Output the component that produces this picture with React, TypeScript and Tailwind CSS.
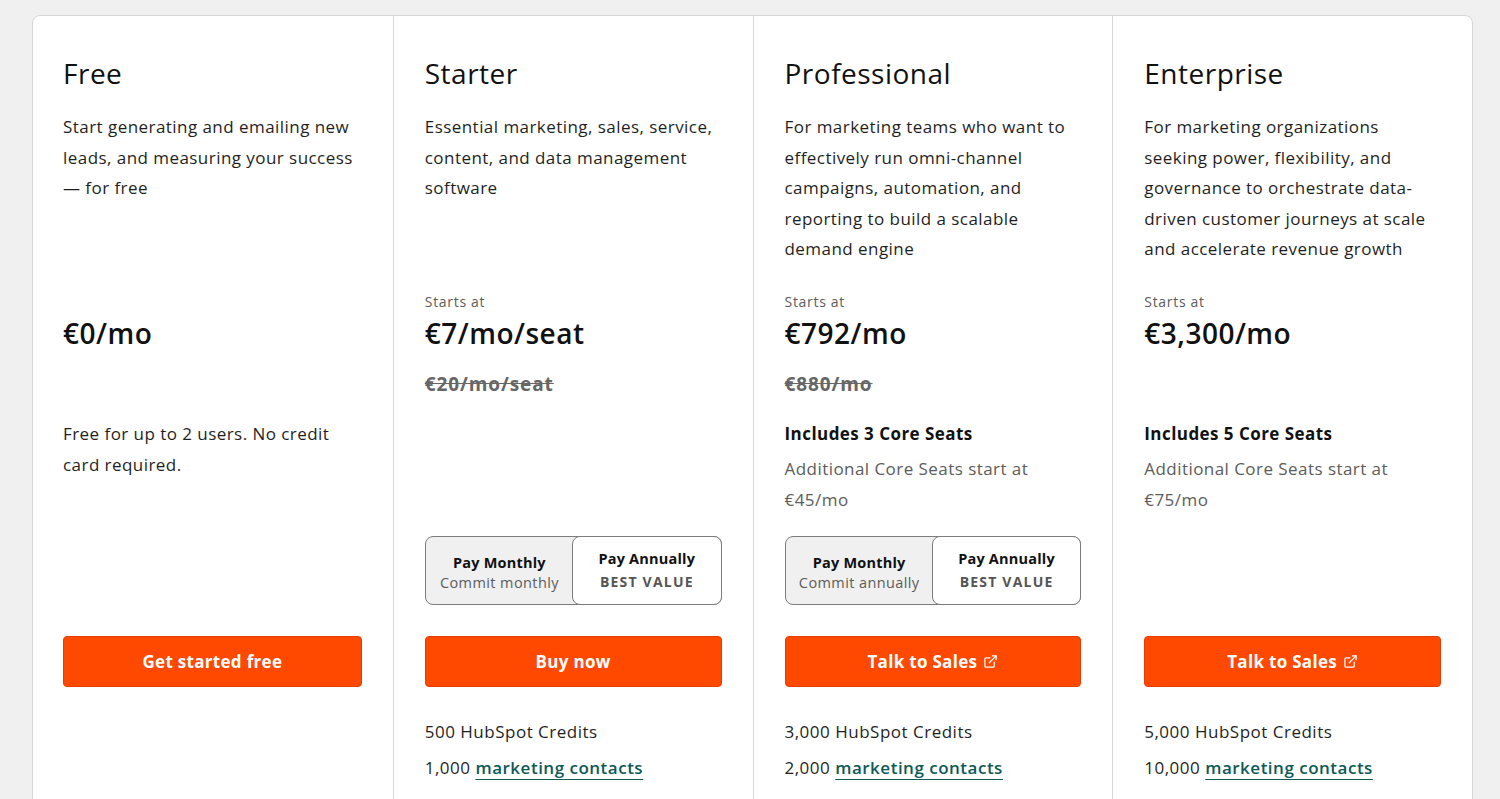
import { ExternalLink } from 'lucide-react';

interface Plan {
  name: string;
  desc: string;
  startsAt: boolean;
  price: string;
  oldPrice?: string;
  freeNote?: string;
  seats?: string;
  seatsNote?: string;
  commit?: string;
  cta: string;
  external?: boolean;
  credits?: string;
  contacts?: string;
}

const plans: Plan[] = [
  {
    name: 'Free',
    desc: 'Start generating and emailing new leads, and measuring your success — for free',
    startsAt: false,
    price: '€0/mo',
    freeNote: 'Free for up to 2 users. No credit card required.',
    cta: 'Get started free',
  },
  {
    name: 'Starter',
    desc: 'Essential marketing, sales, service, content, and data management software',
    startsAt: true,
    price: '€7/mo/seat',
    oldPrice: '€20/mo/seat',
    commit: 'Commit monthly',
    cta: 'Buy now',
    credits: '500 HubSpot Credits',
    contacts: '1,000',
  },
  {
    name: 'Professional',
    desc: 'For marketing teams who want to effectively run omni-channel campaigns, automation, and reporting to build a scalable demand engine',
    startsAt: true,
    price: '€792/mo',
    oldPrice: '€880/mo',
    seats: 'Includes 3 Core Seats',
    seatsNote: 'Additional Core Seats start at €45/mo',
    commit: 'Commit annually',
    cta: 'Talk to Sales',
    external: true,
    credits: '3,000 HubSpot Credits',
    contacts: '2,000',
  },
  {
    name: 'Enterprise',
    desc: 'For marketing organizations seeking power, flexibility, and governance to orchestrate data-driven customer journeys at scale and accelerate revenue growth',
    startsAt: true,
    price: '€3,300/mo',
    seats: 'Includes 5 Core Seats',
    seatsNote: 'Additional Core Seats start at €75/mo',
    cta: 'Talk to Sales',
    external: true,
    credits: '5,000 HubSpot Credits',
    contacts: '10,000',
  },
];

function PlanColumn({ plan, first }: { plan: Plan; first: boolean }) {
  return (
    <div className={`flex flex-col pt-[41px] ${first ? 'pl-[30px] pr-[31px]' : 'border-l border-[#d6d6d6] px-[31px]'}`}>
      <h2 className="text-[28px] leading-8 font-medium tracking-[0.5px] text-[#111]">{plan.name}</h2>
      <p className="mt-[23px] h-[180px] text-[17px] leading-[30.5px] tracking-[0.45px] text-[#1f1f1f]">{plan.desc}</p>

      <div className="h-5 text-[14px] leading-5 tracking-[0.7px] text-[#5c5c5c]">{plan.startsAt ? 'Starts at' : ''}</div>
      <div className="mt-[3px] h-9 text-[28px] leading-9 font-semibold tracking-[0.5px] text-[#111]">{plan.price}</div>
      <div className="mt-5 h-[26px] text-[19px] leading-[26px] font-bold tracking-[0.9px] text-[#666] line-through">
        {plan.oldPrice}
      </div>

      <div className="mt-[22px] h-[117px] text-[17px] tracking-[0.45px]">
        {plan.freeNote && <p className="leading-[30.5px] text-[#1f1f1f]">{plan.freeNote}</p>}
        {plan.seats && (
          <>
            <p className="leading-[30px] font-bold text-[#111]">{plan.seats}</p>
            <p className="mt-[4px] leading-[31px] text-[#5c5c5c]">{plan.seatsNote}</p>
          </>
        )}
      </div>

      <div className="h-[69px]">
        {plan.commit && (
          <div className="flex h-[69px] rounded-lg border border-[#7c7c7c] bg-[#f0f0f0]">
            <div className="flex flex-1 flex-col items-center justify-center pt-1">
              <span className="text-[14.5px] leading-5 font-bold tracking-[0.2px] text-[#111]">Pay Monthly</span>
              <span className="text-[14.5px] leading-5 tracking-[0.4px] text-[#5c5c5c]">{plan.commit}</span>
            </div>
            <div className="-m-px flex flex-1 flex-col items-center justify-center rounded-lg border border-[#7c7c7c] bg-white">
              <span className="text-[14.5px] leading-5 font-bold tracking-[0.2px] text-[#111]">Pay Annually</span>
              <span className="mt-[3px] text-[14px] leading-5 font-bold tracking-[1.2px] text-[#555]">BEST VALUE</span>
            </div>
          </div>
        )}
      </div>

      <button className="mt-[31px] flex h-[51px] items-center justify-center gap-1.5 rounded-[4px] border border-[#e83c00] bg-[#ff4800] text-[17px] font-bold tracking-[0.3px] text-white">
        {plan.cta}
        {plan.external && <ExternalLink size={15} strokeWidth={2} />}
      </button>

      <div className="mt-[30px] h-[120px] text-[17px] tracking-[0.5px] text-[#1f1f1f]">
        {plan.credits && <p className="leading-[30px]">{plan.credits}</p>}
        {plan.contacts && (
          <p className="mt-[6px] leading-[30px]">
            {plan.contacts}{' '}
            <a className="font-semibold text-[#0e5a57] underline decoration-1 underline-offset-[5px]" href="#">
              marketing contacts
            </a>
          </p>
        )}
      </div>
    </div>
  );
}

export default function App() {
  return (
    <div className="min-h-[799px] bg-[#f0f0f0] pl-8 pr-[27px] pt-[15px]" style={{ fontFamily: '"Open Sans", "Noto Sans", sans-serif' }}>
      <div className="grid grid-cols-4 rounded-t-lg border border-[#d6d6d6] bg-white">
        {plans.map((plan, i) => (
          <PlanColumn key={plan.name} plan={plan} first={i === 0} />
        ))}
      </div>
    </div>
  );
}
